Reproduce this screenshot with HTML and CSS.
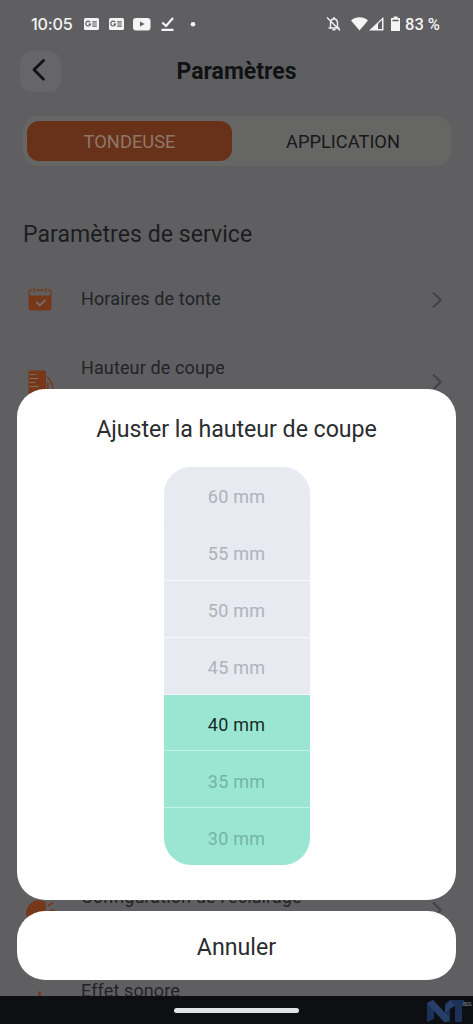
FILE: index.html
```html
<!DOCTYPE html>
<html lang="fr">
<head>
<meta charset="utf-8">
<title>Paramètres</title>
<link rel="stylesheet" href="styles.css">
</head>
<body>
<div class="screen">
  <div class="status">
    <span class="time">10:05</span>
    <svg class="notifs" width="114" height="18" viewBox="0 0 114 18">
      <g fill="#f4f4f4">
        <rect x="1" y="3" width="15" height="12" rx="1.5"/><rect x="26" y="3" width="15" height="12" rx="1.5"/>
        <rect x="50" y="3" width="17.500" height="12.500" rx="3"/><circle cx="110" cy="9.300" r="2.300"/>
      </g>
      <g fill="none" stroke="#5f5f61" stroke-width="1.200">
        <path d="M7.200 7.300A2.400 2.400 0 1 0 7.500 9.200H5.500M9.200 6.800h4.600M9.200 9h4.600M9.200 11.200h4.600"/>
        <path d="M32.200 7.300A2.400 2.400 0 1 0 32.500 9.200H30.500M34.200 6.800h4.600M34.200 9h4.600M34.200 11.200h4.600"/>
      </g>
      <path d="M57 6.600v5l4.600-2.500z" fill="#5f5f61"/>
      <path d="M79.300 7.500l3.700 3.500 7-8M78.500 14.900h12" fill="none" stroke="#f4f4f4" stroke-width="2.200"/>
    </svg>
    <svg class="system" width="76" height="18" viewBox="0 0 76 18">
      <g fill="none" stroke="#f0f0f0" stroke-width="1.400">
        <path d="M4.500 13V8c0-2.600 1.200-3.800 3.500-4.200 2.300.4 3.500 1.600 3.500 4.200v5M2.500 13h11M8 2v2M6.500 14.800h3M1 2.500l13 13"/>
      </g>
      <path d="M25 5.400c4.800-4.100 12.400-4.100 17 0L33.500 15.500zM43 15.600L57.500 2v13.600z" fill="#f4f4f4"/>
      <path d="M52 8.700l4-3.800v9.200h-4z" fill="#5f5f61"/>
      <path d="M67.600 1.500h4V3H74v13h-9V3h2.600z" fill="#f4f4f4"/><path d="M66.500 4.700h6v1.600h-6z" fill="#5f5f61"/>
    </svg>
    <span class="battery">83 %</span>
  </div>

  <header class="header">
    <div class="back"><svg width="41" height="41" viewBox="0 0 41 41"><path d="M23.500 9.500L14 18.800 23.500 28.300" fill="none" stroke="#111214" stroke-width="2.800" stroke-linecap="round" stroke-linejoin="round"/></svg></div>
    <h1>Paramètres</h1>
  </header>

  <nav class="tabs"><span class="tab active">TONDEUSE</span><span class="tab">APPLICATION</span></nav>

  <main>
    <h2>Paramètres de service</h2>
    <div class="row">
      <svg class="icon" width="32" height="32" viewBox="0 0 32 32">
        <path fill="#763819" d="M4.500 11.500h23V24q0 2.600-2.600 2.600H7.100Q4.500 26.600 4.500 24z"/>
        <path fill="none" stroke="#763819" stroke-width="1.300" d="M10 3.500v5.500M22 3.500v5.500M12 6h8M8 6H7Q5.100 6 5.100 8v4M24 6h1q1.900 0 1.900 2v4"/>
        <path fill="none" stroke="#77706c" stroke-width="1.800" stroke-linecap="round" stroke-linejoin="round" d="M12.800 18.300l2.900 3 5.300-5"/>
      </svg>
      <span class="label">Horaires de tonte</span>
      <svg class="chevron" width="12" height="20" viewBox="0 0 12 20"><path d="M2 2.500l7.800 7.500L2 17.500"/></svg>
    </div>
    <div class="row tall">
      <svg class="icon" width="32" height="32" viewBox="0 0 32 32">
        <rect x="4.500" y="4.500" width="17.500" height="26" rx="1.500" fill="#763819"/>
        <path d="M5.500 8.500h6M5.500 12.500h9M5.500 16.500h6M5.500 20.500h9" stroke="#77706c" stroke-width="1.200"/>
        <path d="M23.300 11q6 5 5.500 15M23.800 16v12" fill="none" stroke="#763819" stroke-width="1.500"/>
      </svg>
      <span class="label">Hauteur de coupe</span>
      <svg class="chevron" width="12" height="20" viewBox="0 0 12 20"><path d="M2 2.500l7.800 7.500L2 17.500"/></svg>
    </div>
    <div class="row tall light">
      <svg class="icon" width="32" height="32" viewBox="0 0 32 32">
        <path d="M2 20C2 10 12 3 21.500 8l.5 14L4 25z" fill="#763819"/>
        <path d="M24 11.500l5-2.800M25.500 16.500h5.500" stroke="#763819" stroke-width="1.800"/>
      </svg>
      <span class="label">Configuration de l’éclairage</span>
      <svg class="chevron" width="12" height="20" viewBox="0 0 12 20"><path d="M2 2.500l7.800 7.500L2 17.500"/></svg>
    </div>
    <div class="row tall sound">
      <svg class="icon" width="32" height="32" viewBox="0 0 32 32"><path d="M15.500 2.500v20" stroke="#763819" stroke-width="2.500"/></svg>
      <span class="label">Effet sonore</span>
    </div>
  </main>

  <section class="sheet">
    <div class="picker">
      <h3>Ajuster la hauteur de coupe</h3>
      <div class="scale">
        <span class="step faint">60 mm</span><span class="step">55 mm</span><span class="step">50 mm</span><span class="step">45 mm</span><span class="step on current">40 mm</span><span class="step on">35 mm</span><span class="step on">30 mm</span>
      </div>
    </div>
    <div class="cancel">Annuler</div>
  </section>

  <footer class="navbar">
    <i class="handle"></i>
    <svg class="mark" width="47" height="24" viewBox="0 0 47 24">
      <path d="M1 23V4L7 1l12 13V5l5-4h14v6h-2v16h-7V7l-5 3v13h-5L8 12v8z" fill="#1c3157"/>
      <path d="M1 4l6-3 17 18-3 4h-3zM24 1l-5 7v7l5-6 5-2z" fill="#263e68"/>
      <text x="37" y="6.500" class="mark-text" textLength="9">BLOG</text>
    </svg>
  </footer>
</div>
</body>
</html>
```
FILE: styles.css
```css
* { box-sizing: border-box; }
body { margin: 0; font-family: Roboto, sans-serif; }
h1, h2, h3 { margin: 0; font-weight: 400; }
svg { display: block; flex: none; }
.screen { position: relative; width: 473px; height: 1024px; overflow: hidden; background: #5f5f61; color: #1c1d20; }
.status { display: flex; align-items: center; height: 48px; padding-left: 31px; color: #f4f4f4; }
.time { width: 52px; font: 500 16.2px Inter, sans-serif; letter-spacing: -.2px; }
.system { margin-left: 129px; }
.battery { margin-left: 3px; font: 500 16.5px Roboto, sans-serif; white-space: nowrap; }
.header { display: grid; grid-template-columns: 41px 1fr 41px; align-items: center; height: 44px; padding: 0 20px; margin-top: 1px; }
.back { width: 41px; height: 41px; border-radius: 12px; background: #666668; }
h1 { color: #111214; font-size: 23px; font-weight: 700; text-align: center; line-height: 44px; padding-top: 1px; height: 44px; }
.tabs { display: grid; grid-template-columns: 205px 1fr; height: 50px; margin: 23px 22px 0 23px; padding: 5px 4px; border-radius: 15px; background: #666665; }
.tab { display: flex; align-items: center; justify-content: center; font-size: 18.3px; color: #171819; padding-left: 7px; }
.active { border-radius: 12px; background: #68321a; color: #8f7768; padding: 0; }
h2 { margin: 54px 0 0 23px; height: 30px; line-height: 30px; font-size: 23px; letter-spacing: .06px; }
.row { display: flex; align-items: center; height: 82px; padding: 0 30px 0 24px; }
main h2 + .row { margin-top: 9px; }
.label { margin-left: 25px; flex: 1; font-size: 18px; line-height: 24px; padding-bottom: 3px; white-space: nowrap; letter-spacing: .12px; color: #222326; }
.tall .label { padding-bottom: 29px; }
.light { margin-top: 446px; }
.light .label { padding-bottom: 27px; }
.sound { margin-top: 13px; }
.chevron path { fill: none; stroke: #434345; stroke-width: 2; }
.sheet { position: absolute; top: 389px; left: 17px; width: 439px; color: #2b2c2f; }
.picker { height: 511px; padding-top: 23px; border-radius: 28px; background: #fff; }
h3 { height: 34px; line-height: 35px; font-size: 23.2px; letter-spacing: -.05px; text-align: center; }
.scale { width: 146px; height: 398px; margin: 21px auto 0; border-radius: 27px; overflow: hidden; }
.step { display: flex; align-items: center; justify-content: center; height: 56.900px; padding-top: 4px; border-bottom: 1px solid #f5f7fa; background: #e7eaf1; color: #afb2b9; font-size: 18px; letter-spacing: .2px; }
.faint { border-color: #ebedf3; }
.on { background: #9be6d2; color: #73b5a4; border-color: #c4f0e5; }
.step:last-child { border: 0; }
.current { color: #182a28; }
.cancel { height: 69px; margin-top: 11px; border-radius: 28px; background: #fff; font-size: 23.2px; line-height: 72px; text-align: center; }
.navbar { position: absolute; left: 0; right: 0; bottom: 0; height: 28px; background: #0d0f12; }
.handle { display: block; width: 125px; height: 5px; margin: 11.500px auto 0; border-radius: 3px; background: #e2e3e5; }
.mark { position: absolute; right: 0; bottom: 1px; }
.mark-text { fill: #5b6370; font: 700 5px Roboto, sans-serif; }
```
